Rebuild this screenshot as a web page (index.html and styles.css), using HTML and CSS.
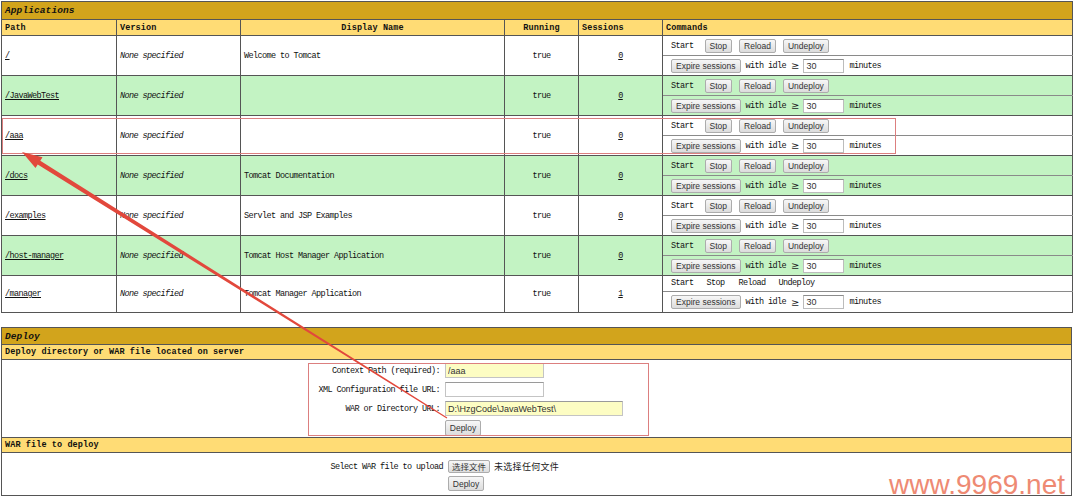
FILE: index.html
```html
<!DOCTYPE html>
<html>
<head>
<meta charset="utf-8">
<title>Tomcat Manager</title>
<link rel="stylesheet" href="styles.css">
</head>
<body>
<div class="page">
<table class="grid apps">
<colgroup>
<col class="w-path"><col class="w-ver"><col class="w-name"><col class="w-run"><col class="w-ses"><col class="w-cmd">
</colgroup>
<tr class="title"><td colspan="6">Applications</td></tr>
<tr class="head"><td>Path</td><td>Version</td><td class="c">Display Name</td><td class="c">Running</td><td>Sessions</td><td>Commands</td></tr>

<tr class="a"><td rowspan="2"><a>/</a></td><td rowspan="2" class="ver">None specified</td><td rowspan="2">Welcome to Tomcat</td><td rowspan="2" class="c">true</td><td rowspan="2" class="c"><a>0</a></td><td class="cmd"><span class="t">Start</span><button class="btn first">Stop</button><button class="btn">Reload</button><button class="btn">Undeploy</button></td></tr>
<tr class="b"><td class="cmd"><button class="btn">Expire sessions</button><span class="t idle">with idle</span><span class="ge">≥</span><input class="num" value="30"><span class="t min">minutes</span></td></tr>

<tr class="a alt"><td rowspan="2"><a>/JavaWebTest</a></td><td rowspan="2" class="ver">None specified</td><td rowspan="2"></td><td rowspan="2" class="c">true</td><td rowspan="2" class="c"><a>0</a></td><td class="cmd"><span class="t">Start</span><button class="btn first">Stop</button><button class="btn">Reload</button><button class="btn">Undeploy</button></td></tr>
<tr class="b alt"><td class="cmd"><button class="btn">Expire sessions</button><span class="t idle">with idle</span><span class="ge">≥</span><input class="num" value="30"><span class="t min">minutes</span></td></tr>

<tr class="a"><td rowspan="2"><a>/aaa</a></td><td rowspan="2" class="ver">None specified</td><td rowspan="2"></td><td rowspan="2" class="c">true</td><td rowspan="2" class="c"><a>0</a></td><td class="cmd"><span class="t">Start</span><button class="btn first">Stop</button><button class="btn">Reload</button><button class="btn">Undeploy</button></td></tr>
<tr class="b"><td class="cmd"><button class="btn">Expire sessions</button><span class="t idle">with idle</span><span class="ge">≥</span><input class="num" value="30"><span class="t min">minutes</span></td></tr>

<tr class="a alt"><td rowspan="2"><a>/docs</a></td><td rowspan="2" class="ver">None specified</td><td rowspan="2">Tomcat Documentation</td><td rowspan="2" class="c">true</td><td rowspan="2" class="c"><a>0</a></td><td class="cmd"><span class="t">Start</span><button class="btn first">Stop</button><button class="btn">Reload</button><button class="btn">Undeploy</button></td></tr>
<tr class="b alt"><td class="cmd"><button class="btn">Expire sessions</button><span class="t idle">with idle</span><span class="ge">≥</span><input class="num" value="30"><span class="t min">minutes</span></td></tr>

<tr class="a"><td rowspan="2"><a>/examples</a></td><td rowspan="2" class="ver">None specified</td><td rowspan="2">Servlet and JSP Examples</td><td rowspan="2" class="c">true</td><td rowspan="2" class="c"><a>0</a></td><td class="cmd"><span class="t">Start</span><button class="btn first">Stop</button><button class="btn">Reload</button><button class="btn">Undeploy</button></td></tr>
<tr class="b"><td class="cmd"><button class="btn">Expire sessions</button><span class="t idle">with idle</span><span class="ge">≥</span><input class="num" value="30"><span class="t min">minutes</span></td></tr>

<tr class="a alt"><td rowspan="2"><a>/host-manager</a></td><td rowspan="2" class="ver">None specified</td><td rowspan="2">Tomcat Host Manager Application</td><td rowspan="2" class="c">true</td><td rowspan="2" class="c"><a>0</a></td><td class="cmd"><span class="t">Start</span><button class="btn first">Stop</button><button class="btn">Reload</button><button class="btn">Undeploy</button></td></tr>
<tr class="b alt"><td class="cmd"><button class="btn">Expire sessions</button><span class="t idle">with idle</span><span class="ge">≥</span><input class="num" value="30"><span class="t min">minutes</span></td></tr>

<tr class="a short"><td rowspan="2"><a>/manager</a></td><td rowspan="2" class="ver">None specified</td><td rowspan="2">Tomcat Manager Application</td><td rowspan="2" class="c">true</td><td rowspan="2" class="c"><a>1</a></td><td class="cmd"><span class="t">Start</span><span class="t p-stop">Stop</span><span class="t p-rel">Reload</span><span class="t p-und">Undeploy</span></td></tr>
<tr class="b last"><td class="cmd"><button class="btn">Expire sessions</button><span class="t idle">with idle</span><span class="ge">≥</span><input class="num" value="30"><span class="t min">minutes</span></td></tr>
</table>

<table class="grid deploy">
<tr class="title"><td>Deploy</td></tr>
<tr class="head"><td>Deploy directory or WAR file located on server</td></tr>
<tr class="body1"><td>
<div class="form server">
<span class="lbl">Context Path (required):</span><input class="field short yel" value="/aaa">
<span class="lbl">XML Configuration file URL:</span><input class="field short" value="">
<span class="lbl">WAR or Directory URL:</span><input class="field long yel" value="D:\HzgCode\JavaWebTest\">
<span class="lbl"></span><button class="btn dep">Deploy</button>
</div>
</td></tr>
<tr class="head"><td>WAR file to deploy</td></tr>
<tr class="body2"><td>
<div class="form upload">
<span class="lbl">Select WAR file to upload</span><span class="file"><button class="btn cjk">选择文件</button><span class="cjk-t">未选择任何文件</span></span>
<span class="lbl"></span><button class="btn dep">Deploy</button>
</div>
</td></tr>
</table>

<svg class="marks" width="1074" height="500" viewBox="0 0 1074 500">
<rect x="2.5" y="118.5" width="893" height="35" fill="none" stroke="#dc7f7f" stroke-width="1"/>
<rect x="308.5" y="363.5" width="340" height="72" fill="none" stroke="#dc7f7f" stroke-width="1"/>
<polygon points="22,152 42.5,157.2 40.3,160.8 447.3,417.6 446.7,418.4 37.7,164.5 35.5,168" fill="#e2483c"/>
</svg>
<div class="wm">www.9969.net</div>
</div>
</body>
</html>
```

FILE: styles.css
```css
* { box-sizing: border-box; }
html, body { margin: 0; background: #fff; }
body {
  font-family: "Liberation Mono", "DejaVu Sans Mono", monospace;
  font-size: 8.5px;
  letter-spacing: -0.6px;
  color: #111;
}
.page {
  position: relative;
  width: 1074px;
  height: 500px;
  padding: 1px 0 0 1px;
  overflow: hidden;
}
.grid {
  border-collapse: collapse;
  table-layout: fixed;
  width: 1071px;
  border: 1px solid #555;
}
.grid td {
  border: 1px solid #555;
  padding: 0 3px;
  vertical-align: middle;
  white-space: nowrap;
  overflow: hidden;
}
.w-path { width: 115px; }
.w-ver { width: 124px; }
.w-name { width: 264px; }
.w-run { width: 74px; }
.w-ses { width: 84px; }
.w-cmd { width: 410px; }

.title td {
  background: #d2a41c;
  font-weight: bold;
  font-style: italic;
  font-size: 9.5px;
  letter-spacing: 0.1px;
  height: 18px;
}
.head td {
  background: #ffdc75;
  font-weight: bold;
  font-size: 8.5px;
  letter-spacing: 0.1px;
  height: 16px;
}
.grid td.c { text-align: center; }
.ver { font-style: italic; }
a { color: #111; text-decoration: underline; }

.alt td { background: #c3f3c3; }
.apps tr.a { height: 20px; }
.apps tr.b { height: 20px; }
.apps tr.short { height: 16px; }
.apps tr.last { height: 21px; }
.apps tr.a td.cmd { border-bottom-color: #8a8a8a; }
.apps tr.b td.cmd { border-top-color: #8a8a8a; }
.grid td.cmd { padding: 0 0 0 8px; }

.btn {
  font-family: "Liberation Sans", Arial, sans-serif;
  font-size: 8.5px;
  letter-spacing: 0;
  color: #333;
  height: 14px;
  padding: 0 4px;
  margin: 0;
  border: 1px solid #acacac;
  border-radius: 2px;
  background: linear-gradient(#f7f7f7, #dcdcdc);
  vertical-align: middle;
  line-height: 12px;
}
.cmd .btn + .btn { margin-left: 7px; }
.cmd .btn.first { margin-left: 11px; }
.t { vertical-align: middle; }
.idle { margin-left: 5px; }
.ge {
  font-family: "DejaVu Sans", sans-serif;
  font-size: 10px;
  letter-spacing: 0;
  margin: 0 4px 0 5px;
  vertical-align: middle;
  color: #222;
}
.num {
  width: 41px;
  height: 14px;
  margin: 0;
  padding: 0 2px;
  border: 1px solid #bcbcbc;
  border-top-color: #8c8c8c;
  font-family: "Liberation Sans", Arial, sans-serif;
  font-size: 9px;
  letter-spacing: 0;
  color: #333;
  vertical-align: middle;
  background: #fff;
}
.min { margin-left: 5px; }
.p-stop { margin-left: 13px; }
.p-rel { margin-left: 14px; }
.p-und { margin-left: 13px; }

.deploy { margin-top: 14px; }
.deploy .title td { height: 17px; }
.deploy .head td { height: 15px; }
.deploy tr.body1 td { height: 78px; vertical-align: top; padding-top: 3px; }
.deploy tr.body2 td { height: 43px; vertical-align: top; padding-top: 7px; }

.form {
  display: grid;
  align-items: center;
  justify-items: start;
  column-gap: 5px;
}
.form .lbl { justify-self: end; }
.server {
  grid-template-columns: 129px auto;
  grid-auto-rows: 15px;
  row-gap: 4px;
  margin-left: 306px;
}
.upload {
  grid-template-columns: 112px auto;
  grid-auto-rows: 13px;
  row-gap: 4px;
  margin-left: 326px;
}
.upload .dep { height: 15px; }
.field {
  height: 15px;
  margin: 0;
  padding: 0 2px;
  border: 1px solid #c4c4c4;
  border-top-color: #9a9a9a;
  font-family: "Liberation Sans", Arial, sans-serif;
  font-size: 9px;
  letter-spacing: 0;
  color: #333;
  background: #fff;
}
.field.short { width: 99px; }
.field.long { width: 178px; }
.field.yel { background: #fdfdc3; }
.dep { height: 16px; width: 36px; padding: 0; }
.file { display: flex; align-items: center; }
.btn.cjk {
  font-family: "Noto Sans CJK SC", sans-serif;
  font-size: 8.5px;
  height: 13px;
  width: 42px;
  padding: 0;
  line-height: 11px;
}
.cjk-t {
  font-family: "Noto Sans CJK SC", sans-serif;
  font-size: 9px;
  letter-spacing: 0.3px;
  margin-left: 4px;
  color: #222;
}

.marks {
  position: absolute;
  left: 0;
  top: 0;
  pointer-events: none;
}
.wm {
  position: absolute;
  top: 471px;
  right: 9px;
  font-family: "Liberation Sans", Arial, sans-serif;
  font-size: 28px;
  line-height: 28px;
  letter-spacing: 0;
  color: #ee8a73;
}
```
